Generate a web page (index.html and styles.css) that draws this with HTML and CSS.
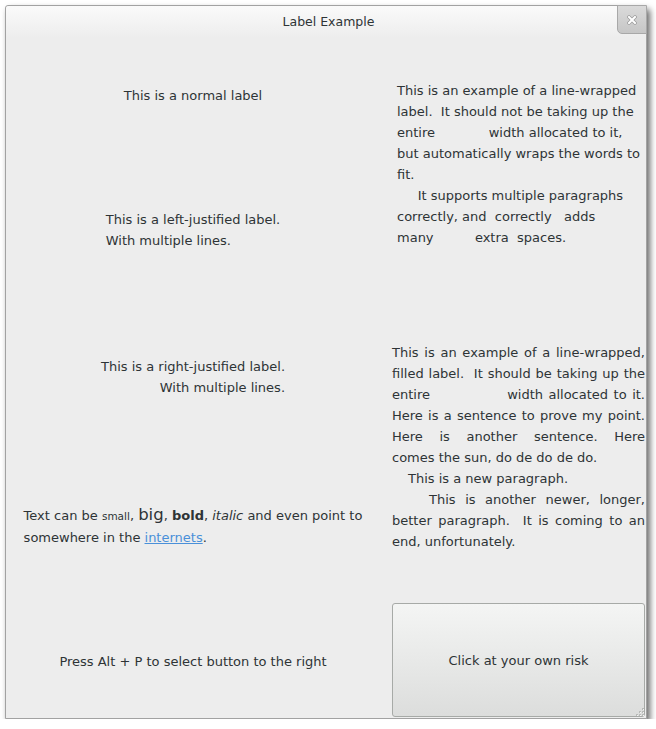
FILE: index.html
```html
<!DOCTYPE html>
<html>
<head>
<meta charset="utf-8">
<title>Label Example</title>
<link rel="stylesheet" href="styles.css">
</head>
<body>
<div class="window">
  <div class="titlebar">
    <div class="title">Label Example</div>
    <div class="close">
      <svg width="10" height="10" viewBox="0 0 10 10">
        <path d="M2 2 L8 8 M8 2 L2 8" stroke="#9a9a9a" stroke-width="3.4" stroke-linecap="square" fill="none"/>
        <path d="M2 2 L8 8 M8 2 L2 8" stroke="#ffffff" stroke-width="2" stroke-linecap="square" fill="none"/>
      </svg>
    </div>
  </div>
  <div class="content">
    <div class="col left">
      <div class="lbl l1">This is a normal label</div>
      <div class="lbl l2">This is a left-justified label.<br>With multiple lines.</div>
      <div class="lbl l3">This is a right-justified label.<br>With multiple lines.</div>
      <div class="lbl l4">Text can be <span class="small">small</span>, <span class="big">big</span>, <b>bold</b>, <i>italic</i> and even point to<br>somewhere in the <a class="link" href="#">internets</a>.</div>
      <div class="lbl l5">Press Alt + P to select button to the right</div>
    </div>
    <div class="col right">
      <div class="wrapped">
        <span class="ln">This is an example of a line-wrapped</span>
        <span class="ln">label.  It should not be taking up the</span>
        <span class="ln">entire             width allocated to it,</span>
        <span class="ln">but automatically wraps the words to</span>
        <span class="ln">fit.</span>
        <span class="ln">     It supports multiple paragraphs</span>
        <span class="ln">correctly, and  correctly   adds</span>
        <span class="ln">many          extra  spaces.</span>
      </div>
      <div class="filled">
        <span class="ln j">This is an example of a line-wrapped,</span>
        <span class="ln j">filled label.  It should be taking up the</span>
        <span class="ln j">entire              width allocated to it.</span>
        <span class="ln j">Here is a sentence to prove my point.</span>
        <span class="ln j">Here is another sentence. Here</span>
        <span class="ln">comes the sun, do de do de do.</span>
        <span class="ln ind1">This is a new paragraph.</span>
        <span class="ln j ind2">This is another newer, longer,</span>
        <span class="ln j">better paragraph.  It is coming to an</span>
        <span class="ln">end, unfortunately.</span>
      </div>
      <button class="btn">Click at your own risk</button>
    </div>
  </div>
  <svg class="grip" width="11" height="11" viewBox="0 0 11 11">
    <g fill="#b8bab8">
      <rect x="8" y="2" width="2" height="2"/>
      <rect x="5" y="5" width="2" height="2"/><rect x="8" y="5" width="2" height="2"/>
      <rect x="2" y="8" width="2" height="2"/><rect x="5" y="8" width="2" height="2"/><rect x="8" y="8" width="2" height="2"/>
    </g>
    <g fill="#f6f6f6">
      <rect x="9" y="3" width="1" height="1"/>
      <rect x="6" y="6" width="1" height="1"/><rect x="9" y="6" width="1" height="1"/>
      <rect x="3" y="9" width="1" height="1"/><rect x="6" y="9" width="1" height="1"/><rect x="9" y="9" width="1" height="1"/>
    </g>
  </svg>
</div>
</body>
</html>
```
FILE: styles.css
```css
html, body {
  margin: 0;
  padding: 0;
  background: #ffffff;
}
body {
  padding: 5px 0 0 5px;
  font-family: "DejaVu Sans", sans-serif;
  font-size: 13px;
  color: #2e3436;
}
.window {
  position: relative;
  width: 640px;
  height: 712px;
  border: 1px solid #a2a2a2;
  border-radius: 3px 3px 0 0;
  background: #ededed;
  box-shadow: 3px 4px 6px rgba(0, 0, 0, 0.6);
  display: flex;
  flex-direction: column;
}
.titlebar {
  height: 32px;
  display: flex;
  align-items: flex-start;
  background: linear-gradient(#fafafa, #f1f1f1 70%, #ededed);
  border-radius: 3px 3px 0 0;
}
.title {
  flex: 1;
  text-align: center;
  font-size: 12.5px;
  line-height: 31px;
  padding-left: 34px;
  color: #2e3436;
}
.close {
  width: 28px;
  height: 27px;
  margin-top: -1px;
  margin-right: -1px;
  background: linear-gradient(#dadada, #c6c6c6);
  border: 1px solid #a8a8a8;
  border-bottom-left-radius: 5px;
  display: flex;
  align-items: center;
  justify-content: center;
}
.content {
  flex: 1;
  display: flex;
}
.col {
  display: flex;
  flex-direction: column;
}
.left {
  width: 374px;
  align-items: center;
}
.right {
  flex: 1;
  padding-left: 12px;
}
.lbl {
  line-height: 21px;
  white-space: nowrap;
}
.l1 { margin-top: 47px; }
.l2 { margin-top: 103px; text-align: left; }
.l3 { margin-top: 105px; text-align: right; }
.l4 { margin-top: 106px; text-align: left; line-height: 22px; }
.l5 { margin-top: 102px; }
.small { font-size: 10.5px; }
.big { font-size: 16.5px; }
.link {
  color: #4a90d9;
  text-decoration: underline;
}
.ln {
  display: block;
  white-space: pre-wrap;
  line-height: 21px;
}
.wrapped {
  margin-top: 42px;
  margin-left: 5px;
}
.filled {
  margin-top: 94px;
  width: 253px;
}
.j {
  text-align: justify;
  text-align-last: justify;
}
.ind1 { padding-left: 16px; }
.ind2 { padding-left: 37px; }
.btn {
  margin-top: 51px;
  width: 253px;
  height: 114px;
  border: 1px solid #a7aaa7;
  border-radius: 3px;
  background: linear-gradient(#f4f5f4, #e8e9e8 50%, #dcdddc);
  font-family: "DejaVu Sans", sans-serif;
  font-size: 13px;
  color: #2e3436;
  padding: 0;
}
.grip {
  position: absolute;
  right: 1px;
  bottom: 1px;
}
```
